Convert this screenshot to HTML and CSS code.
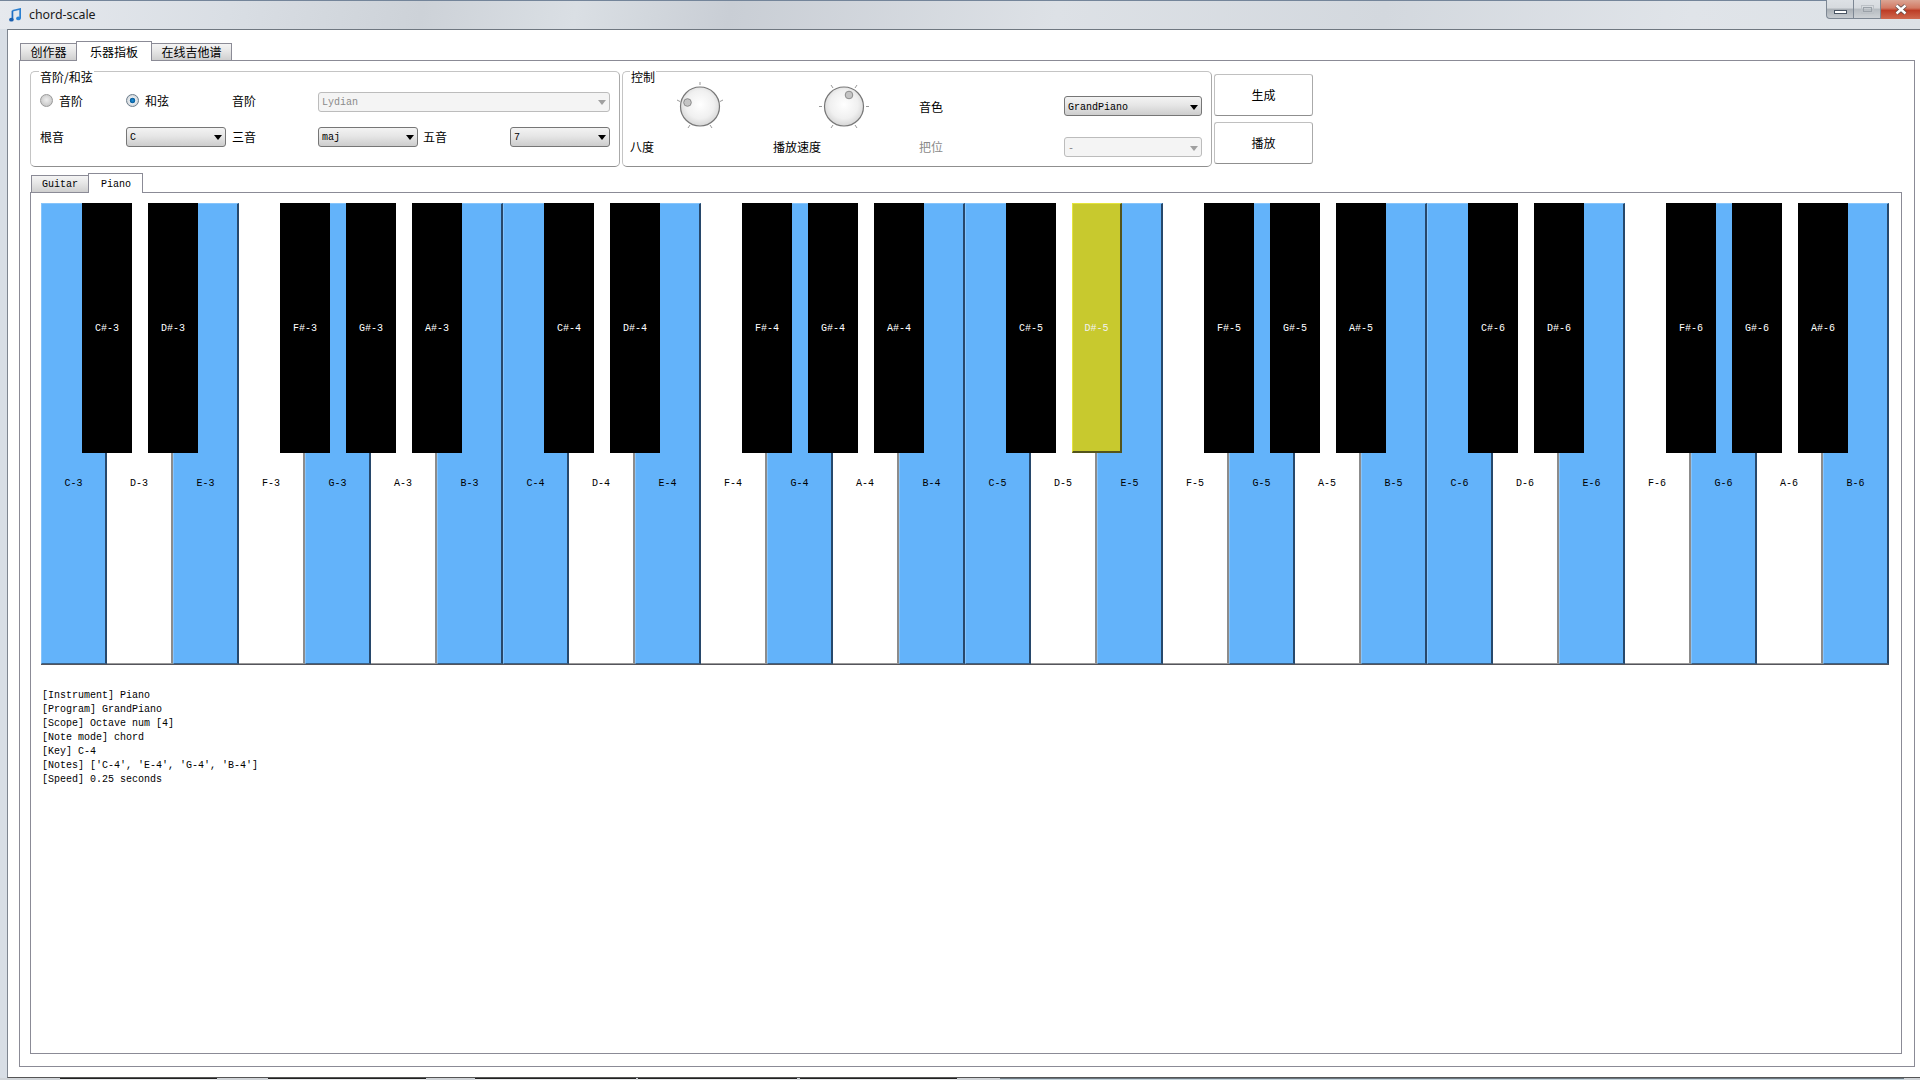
FILE: index.html
```html
<!DOCTYPE html>
<html>
<head>
  <title>chord-scale</title>
  <link rel="stylesheet" href="styles.css">
</head>
<body>
  <div class="window">
    <div class="titlebar">
      <svg class="app-icon" width="12" height="14" viewBox="0 0 14 16">
        <path d="M4 3 L13 1 V12" fill="none" stroke="#2b7fd0" stroke-width="2"/>
        <path d="M4 3 V13.5" fill="none" stroke="#1f6fc4" stroke-width="2"/>
        <ellipse cx="2.8" cy="13.5" rx="2.7" ry="2.2" fill="#1a5fb0"/>
        <ellipse cx="11" cy="12" rx="2.7" ry="2.2" fill="#2a84d8"/>
      </svg>
      <span class="app-name">chord-scale</span>
      <div class="win-buttons">
        <div class="win-btn win-min"><span></span></div>
        <div class="win-btn win-max"><span></span></div>
        <div class="win-btn win-close">
          <svg width="14" height="11" viewBox="0 0 14 11">
            <path d="M2.5 1.5 L11.5 9.5 M11.5 1.5 L2.5 9.5" stroke="#5a4a48" stroke-width="4"/>
            <path d="M2.5 1.5 L11.5 9.5 M11.5 1.5 L2.5 9.5" stroke="#fff" stroke-width="2.4"/>
          </svg>
        </div>
      </div>
    </div>

    <div class="content">
      <div class="tabs">
        <div class="tab">创作器</div>
        <div class="tab active">乐器指板</div>
        <div class="tab">在线吉他谱</div>
      </div>

      <div class="pane">
        <div class="top-row">
          <div class="group group-scale">
            <div class="group-title">音阶/和弦</div>
            <div class="radio-item"><span class="radio"></span>音阶</div>
            <div class="radio-item"><span class="radio checked"></span>和弦</div>
            <div class="label first-row">音阶</div>
            <div class="combo disabled wide"><span>Lydian</span><i class="arrow"></i></div>
            <div class="label raised">根音</div>
            <div class="combo"><span>C</span><i class="arrow"></i></div>
            <div class="label raised">三音</div>
            <div class="combo"><span>maj</span><i class="arrow"></i></div>
            <div class="label raised">五音</div>
            <div class="combo"><span>7</span><i class="arrow"></i></div>
          </div>

          <div class="group group-control">
            <div class="group-title">控制</div>
            <svg class="dial dial-octave" width="60" height="50" viewBox="0 0 60 50">
              <defs>
                <radialGradient id="dialFace" cx="50%" cy="45%" r="60%">
                  <stop offset="0" stop-color="#ffffff"/>
                  <stop offset="0.6" stop-color="#f0f0f0"/>
                  <stop offset="1" stop-color="#cfcfcf"/>
                </radialGradient>
              </defs>
              <path d="M30 2 V5 M7 20 L10 21.5 M53 20 L50 21.5 M18 48 L20 45 M42 48 L40 45" stroke="#999" fill="none"/>
              <circle cx="30" cy="26.5" r="19.5" fill="url(#dialFace)" stroke="#777" stroke-width="1.2"/>
              <circle cx="17.5" cy="22.5" r="3.8" fill="#c4c4c4" stroke="#8c8c8c"/>
            </svg>
            <svg class="dial dial-speed" width="60" height="50" viewBox="0 0 60 50">
              <path d="M5 26.5 H8 M52 26.5 H55 M17 5 L19 8 M43 5 L41 8 M17 48 L19 45 M43 48 L41 45" stroke="#999" fill="none"/>
              <circle cx="30" cy="26.5" r="19.5" fill="url(#dialFace)" stroke="#777" stroke-width="1.2"/>
              <circle cx="35" cy="15" r="3.8" fill="#c4c4c4" stroke="#8c8c8c"/>
            </svg>
            <div class="label">音色</div>
            <div class="combo"><span>GrandPiano</span><i class="arrow"></i></div>
            <div class="label raised">八度</div>
            <div class="label raised">播放速度</div>
            <div class="label raised muted">把位</div>
            <div class="combo disabled"><span>-</span><i class="arrow"></i></div>
          </div>

          <div class="actions">
            <button class="action">生成</button>
            <button class="action">播放</button>
          </div>
        </div>

        <div class="tabs sub-tabs">
          <div class="tab">Guitar</div>
          <div class="tab active">Piano</div>
        </div>

        <div class="inner-pane">
          <div class="keyboard">
            <div class="key blue"><div class="black">C#-3</div>C-3</div>
            <div class="key"><div class="black">D#-3</div>D-3</div>
            <div class="key blue">E-3</div>
            <div class="key"><div class="black">F#-3</div>F-3</div>
            <div class="key blue"><div class="black">G#-3</div>G-3</div>
            <div class="key"><div class="black">A#-3</div>A-3</div>
            <div class="key blue">B-3</div>
            <div class="key blue"><div class="black">C#-4</div>C-4</div>
            <div class="key"><div class="black">D#-4</div>D-4</div>
            <div class="key blue">E-4</div>
            <div class="key"><div class="black">F#-4</div>F-4</div>
            <div class="key blue"><div class="black">G#-4</div>G-4</div>
            <div class="key"><div class="black">A#-4</div>A-4</div>
            <div class="key blue">B-4</div>
            <div class="key blue"><div class="black">C#-5</div>C-5</div>
            <div class="key"><div class="black playing">D#-5</div>D-5</div>
            <div class="key blue">E-5</div>
            <div class="key"><div class="black">F#-5</div>F-5</div>
            <div class="key blue"><div class="black">G#-5</div>G-5</div>
            <div class="key"><div class="black">A#-5</div>A-5</div>
            <div class="key blue">B-5</div>
            <div class="key blue"><div class="black">C#-6</div>C-6</div>
            <div class="key"><div class="black">D#-6</div>D-6</div>
            <div class="key blue">E-6</div>
            <div class="key"><div class="black">F#-6</div>F-6</div>
            <div class="key blue"><div class="black">G#-6</div>G-6</div>
            <div class="key"><div class="black">A#-6</div>A-6</div>
            <div class="key blue">B-6</div>
          </div>
          <pre class="log">[Instrument] Piano
[Program] GrandPiano
[Scope] Octave num [4]
[Note mode] chord
[Key] C-4
[Notes] ['C-4', 'E-4', 'G-4', 'B-4']
[Speed] 0.25 seconds</pre>
        </div>
      </div>
    </div>

    <div class="taskbar-edge">
      <div class="seg s60"></div>
      <div class="seg item s157"></div>
      <div class="seg s51"></div>
      <div class="seg item s158"></div>
      <div class="seg s49"></div>
      <div class="seg item s161"></div>
      <div class="seg item s159"></div>
      <div class="seg item s157b"></div>
      <div class="seg s43"></div>
      <div class="seg item long"></div>
      <div class="seg s16"></div>
    </div>
  </div>
</body>
</html>
```

FILE: styles.css
```css
html, body {
  margin: 0;
  padding: 0;
}
body {
  width: 1920px;
  height: 1080px;
  overflow: hidden;
  font-family: "Noto Sans CJK SC", "Liberation Sans", sans-serif;
  font-size: 12px;
  color: #000;
}
.window {
  width: 1920px;
  height: 1080px;
  display: flex;
  flex-direction: column;
  background: #d8dee5;
  box-sizing: border-box;
}

/* title bar */
.titlebar {
  height: 29px;
  flex: none;
  display: flex;
  align-items: flex-start;
  box-sizing: border-box;
  border-top: 1px solid #74859a;
  background: linear-gradient(100deg, #e6e9ee 0, #d9dee4 12%, #cdd2d8 22%, #dadfe4 30%, #c9ced5 38%, #dde1e6 55%, #d3d8de 72%, #e0e4e9 88%, #dce1e6 100%);
}
.app-icon {
  margin: 7px 0 0 9px;
}
.app-name {
  margin: 6px 0 0 8px;
  font-family: "Noto Sans", "Liberation Sans", sans-serif;
  font-size: 12.4px;
  line-height: 16px;
  color: #1a1a1a;
}
.win-buttons {
  margin-left: auto;
  display: flex;
  height: 19px;
  margin-top: -1px;
}
.win-btn {
  height: 19px;
  box-sizing: border-box;
  display: flex;
  align-items: center;
  justify-content: center;
  border: 1px solid #7d8793;
  border-top: none;
  border-left: none;
}
.win-min {
  width: 28px;
  border-left: 1px solid #7d8793;
  border-radius: 0 0 0 4px;
  background: linear-gradient(#dde1e5 0, #d6dade 45%, #a9afb5 50%, #c5cacf 100%);
}
.win-min span {
  width: 11px;
  height: 2px;
  margin-top: 6px;
  background: #fff;
  border: 1px solid #4a5563;
}
.win-max {
  width: 27px;
  background: linear-gradient(#dde1e5 0, #d6dade 45%, #b5bbc0 50%, #cdd1d5 100%);
}
.win-max span {
  width: 7px;
  height: 3px;
  border: 1px solid #9aa1a8;
  outline: 1px solid #bcc1c6;
  outline-offset: 1px;
  margin-top: 0;
}
.win-close {
  width: 39px;
  border: none;
  background: linear-gradient(#dba594 0, #d27a64 42%, #bd3d26 55%, #cf6a50 100%);
}

/* main area */
.content {
  flex: 1;
  margin-left: 7px;
  background: #fff;
  border-left: 1px solid #7f8690;
  border-top: 1px solid #6f7780;
  border-bottom: 1px solid #555;
  padding: 11px 5px 10px 11px;
  display: flex;
  flex-direction: column;
  box-sizing: border-box;
  min-height: 0;
}
.tabs {
  display: flex;
  height: 19px;
  flex: none;
  margin-left: 1px;
  position: relative;
  z-index: 1;
  align-items: flex-start;
}
.tab {
  height: 18px;
  margin-top: 2px;
  margin-right: -1px;
  padding: 0 9.5px;
  box-sizing: border-box;
  border: 1px solid #8b8b96;
  background: linear-gradient(#f4f4f4 0, #e6e6e6 45%, #cfcfcf 100%);
  line-height: 16px;
  white-space: nowrap;
}
.tab.active {
  height: 20px;
  margin-top: 0;
  padding: 0 13px;
  background: #fff;
  border-bottom: none;
  position: relative;
  z-index: 1;
  line-height: 19px;
}
.pane {
  flex: 1;
  width: 1896px;
  box-sizing: border-box;
  border: 1px solid #8b8b96;
  padding: 10px 12px 12px 10px;
  display: flex;
  flex-direction: column;
  min-height: 0;
}
.top-row {
  display: flex;
  gap: 2px;
  height: 96px;
  flex: none;
  margin-bottom: 6px;
}

/* group boxes */
.group {
  position: relative;
  box-sizing: border-box;
  height: 96px;
  border: 1px solid #c4c4c4;
  border-bottom-color: #8f8f8f;
  border-right-color: #aaa;
  border-radius: 5px;
  display: grid;
  align-items: center;
  justify-items: start;
}
.group-title {
  position: absolute;
  left: 8px;
  top: -3px;
  padding: 0 1px;
  background: #fff;
  line-height: 15px;
}
.group-scale {
  width: 590px;
  padding: 20px 0 0 9px;
  grid-template-columns: 86px 106px 86px 105px 87px 100px;
  grid-template-rows: 20px 20px;
  row-gap: 15px;
  align-content: start;
}
.group-control {
  width: 590px;
  padding: 8px 0 0 7px;
  grid-template-columns: 143px 146px 145px 138px;
  grid-template-rows: 52px 20px;
  row-gap: 5px;
  align-content: start;
}
.group-control .group-title {
  left: 7px;
}
.label {
  line-height: 19px;
}
.raised {
  margin-bottom: 2px;
}
.first-row {
  margin-bottom: 4px;
}
.muted {
  color: #8a8a8a;
}
.radio-item {
  display: flex;
  align-items: center;
  gap: 6px;
  line-height: 19px;
  margin-bottom: 4px;
}
.radio {
  width: 11px;
  height: 11px;
  border-radius: 50%;
  border: 1px solid #9a9a9a;
  background: radial-gradient(circle at 50% 45%, #eeeeee 0, #d0d0d0 60%, #b4b4b4 100%);
}
.radio.checked {
  border-color: #6c7d8c;
  background: radial-gradient(circle, #1f8fd6 0, #0a5f9e 32%, #e8ecef 40%, #c0c5ca 100%);
}
.combo {
  width: 100px;
  height: 20px;
  box-sizing: border-box;
  border: 1px solid #767676;
  border-radius: 3px;
  padding: 1px 3px 0;
  display: flex;
  align-items: center;
  justify-content: space-between;
  background: linear-gradient(#f3f3f3 0, #e6e6e6 45%, #cdcdcd 100%);
  font-family: "Liberation Mono", monospace;
  font-size: 10px;
}
.group-control .combo {
  width: 138px;
  padding-top: 2px;
}
.combo.wide {
  grid-column: span 3;
  width: 292px;
}
.combo.disabled {
  background: #f4f4f4;
  border-color: #bcbcbc;
  color: #8a8a8a;
}
.arrow {
  width: 0;
  height: 0;
  border-left: 4px solid transparent;
  border-right: 4px solid transparent;
  border-top: 5px solid #000;
}
.disabled .arrow {
  border-top-color: #a0a0a0;
}
.dial {
  align-self: start;
}
.dial-octave {
  margin-left: 40px;
}
.dial-speed {
  margin-left: 41px;
}

.actions {
  display: flex;
  flex-direction: column;
  gap: 6px;
  padding-top: 3px;
}
.action {
  width: 99px;
  height: 42px;
  background: #fff;
  border: 1px solid #c0c0c0;
  border-bottom-color: #8f8f8f;
  border-right-color: #aaa;
  border-radius: 3px;
  font-family: inherit;
  font-size: 12px;
  padding: 0 0 2px;
}

/* instrument tabs */
.sub-tabs {
  font-family: "Liberation Mono", monospace;
  font-size: 10px;
}
.sub-tabs .tab {
  padding: 0 10px;
  line-height: 18px;
}
.sub-tabs .tab.active {
  padding: 0 11px 0 12px;
  line-height: 21px;
}
.inner-pane {
  flex: 1;
  box-sizing: border-box;
  border: 1px solid #8b8b96;
  padding: 10px 12px 0 10px;
  min-height: 0;
}

/* piano */
.keyboard {
  display: flex;
  width: 1848px;
  height: 462px;
  box-sizing: border-box;
  border-bottom: 1px solid #55555c;
  font-family: "Liberation Mono", monospace;
  font-size: 10px;
}
.key {
  position: relative;
  width: 66px;
  height: 461px;
  box-sizing: border-box;
  background: #fff;
  border-top: 1px solid #fff;
  border-right: 2px solid #8c8c8c;
  border-bottom: 1px solid #9a9a9a;
  padding-top: 273px;
  text-align: center;
  line-height: 14px;
}
.key.blue {
  background: #63b3fa;
  border-top-color: #86c4fb;
  border-left: 1px solid #86c4fb;
  border-right-color: #27486b;
  border-bottom-color: #3b6288;
}
.black {
  position: absolute;
  top: -1px;
  right: -27px;
  z-index: 2;
  width: 50px;
  height: 250px;
  box-sizing: border-box;
  padding-top: 119px;
  background: #000;
  color: #fff;
}
.black.playing {
  background: #c8c92e;
  border: 1px solid #e4e43c;
  border-right: 2px solid #54541c;
  border-bottom: 2px solid #54541c;
  padding-top: 118px;
  color: #f2f2f2;
}
.log {
  margin: 24px 0 0 1px;
  font-family: "Liberation Mono", monospace;
  font-size: 10px;
  line-height: 14px;
}

/* strip of the desktop below the window */
.taskbar-edge {
  height: 2px;
  flex: none;
  display: flex;
  background: #d0d4d8;
}
.seg {
  height: 2px;
  box-sizing: border-box;
}
.item {
  border-top: 1px solid #222;
  background: #e8eaec;
}
.s60 { width: 60px; }
.s157 { width: 157px; }
.s51 { width: 51px; }
.s158 { width: 158px; }
.s49 { width: 49px; }
.s161 { width: 161px; margin-right: 2px; }
.s159 { width: 159px; margin-right: 3px; }
.s157b { width: 157px; }
.s43 { width: 43px; }
.s16 { width: 16px; }
.long { flex: 1; border-top-color: #6a7680; background: #c4d4dc; }
```
